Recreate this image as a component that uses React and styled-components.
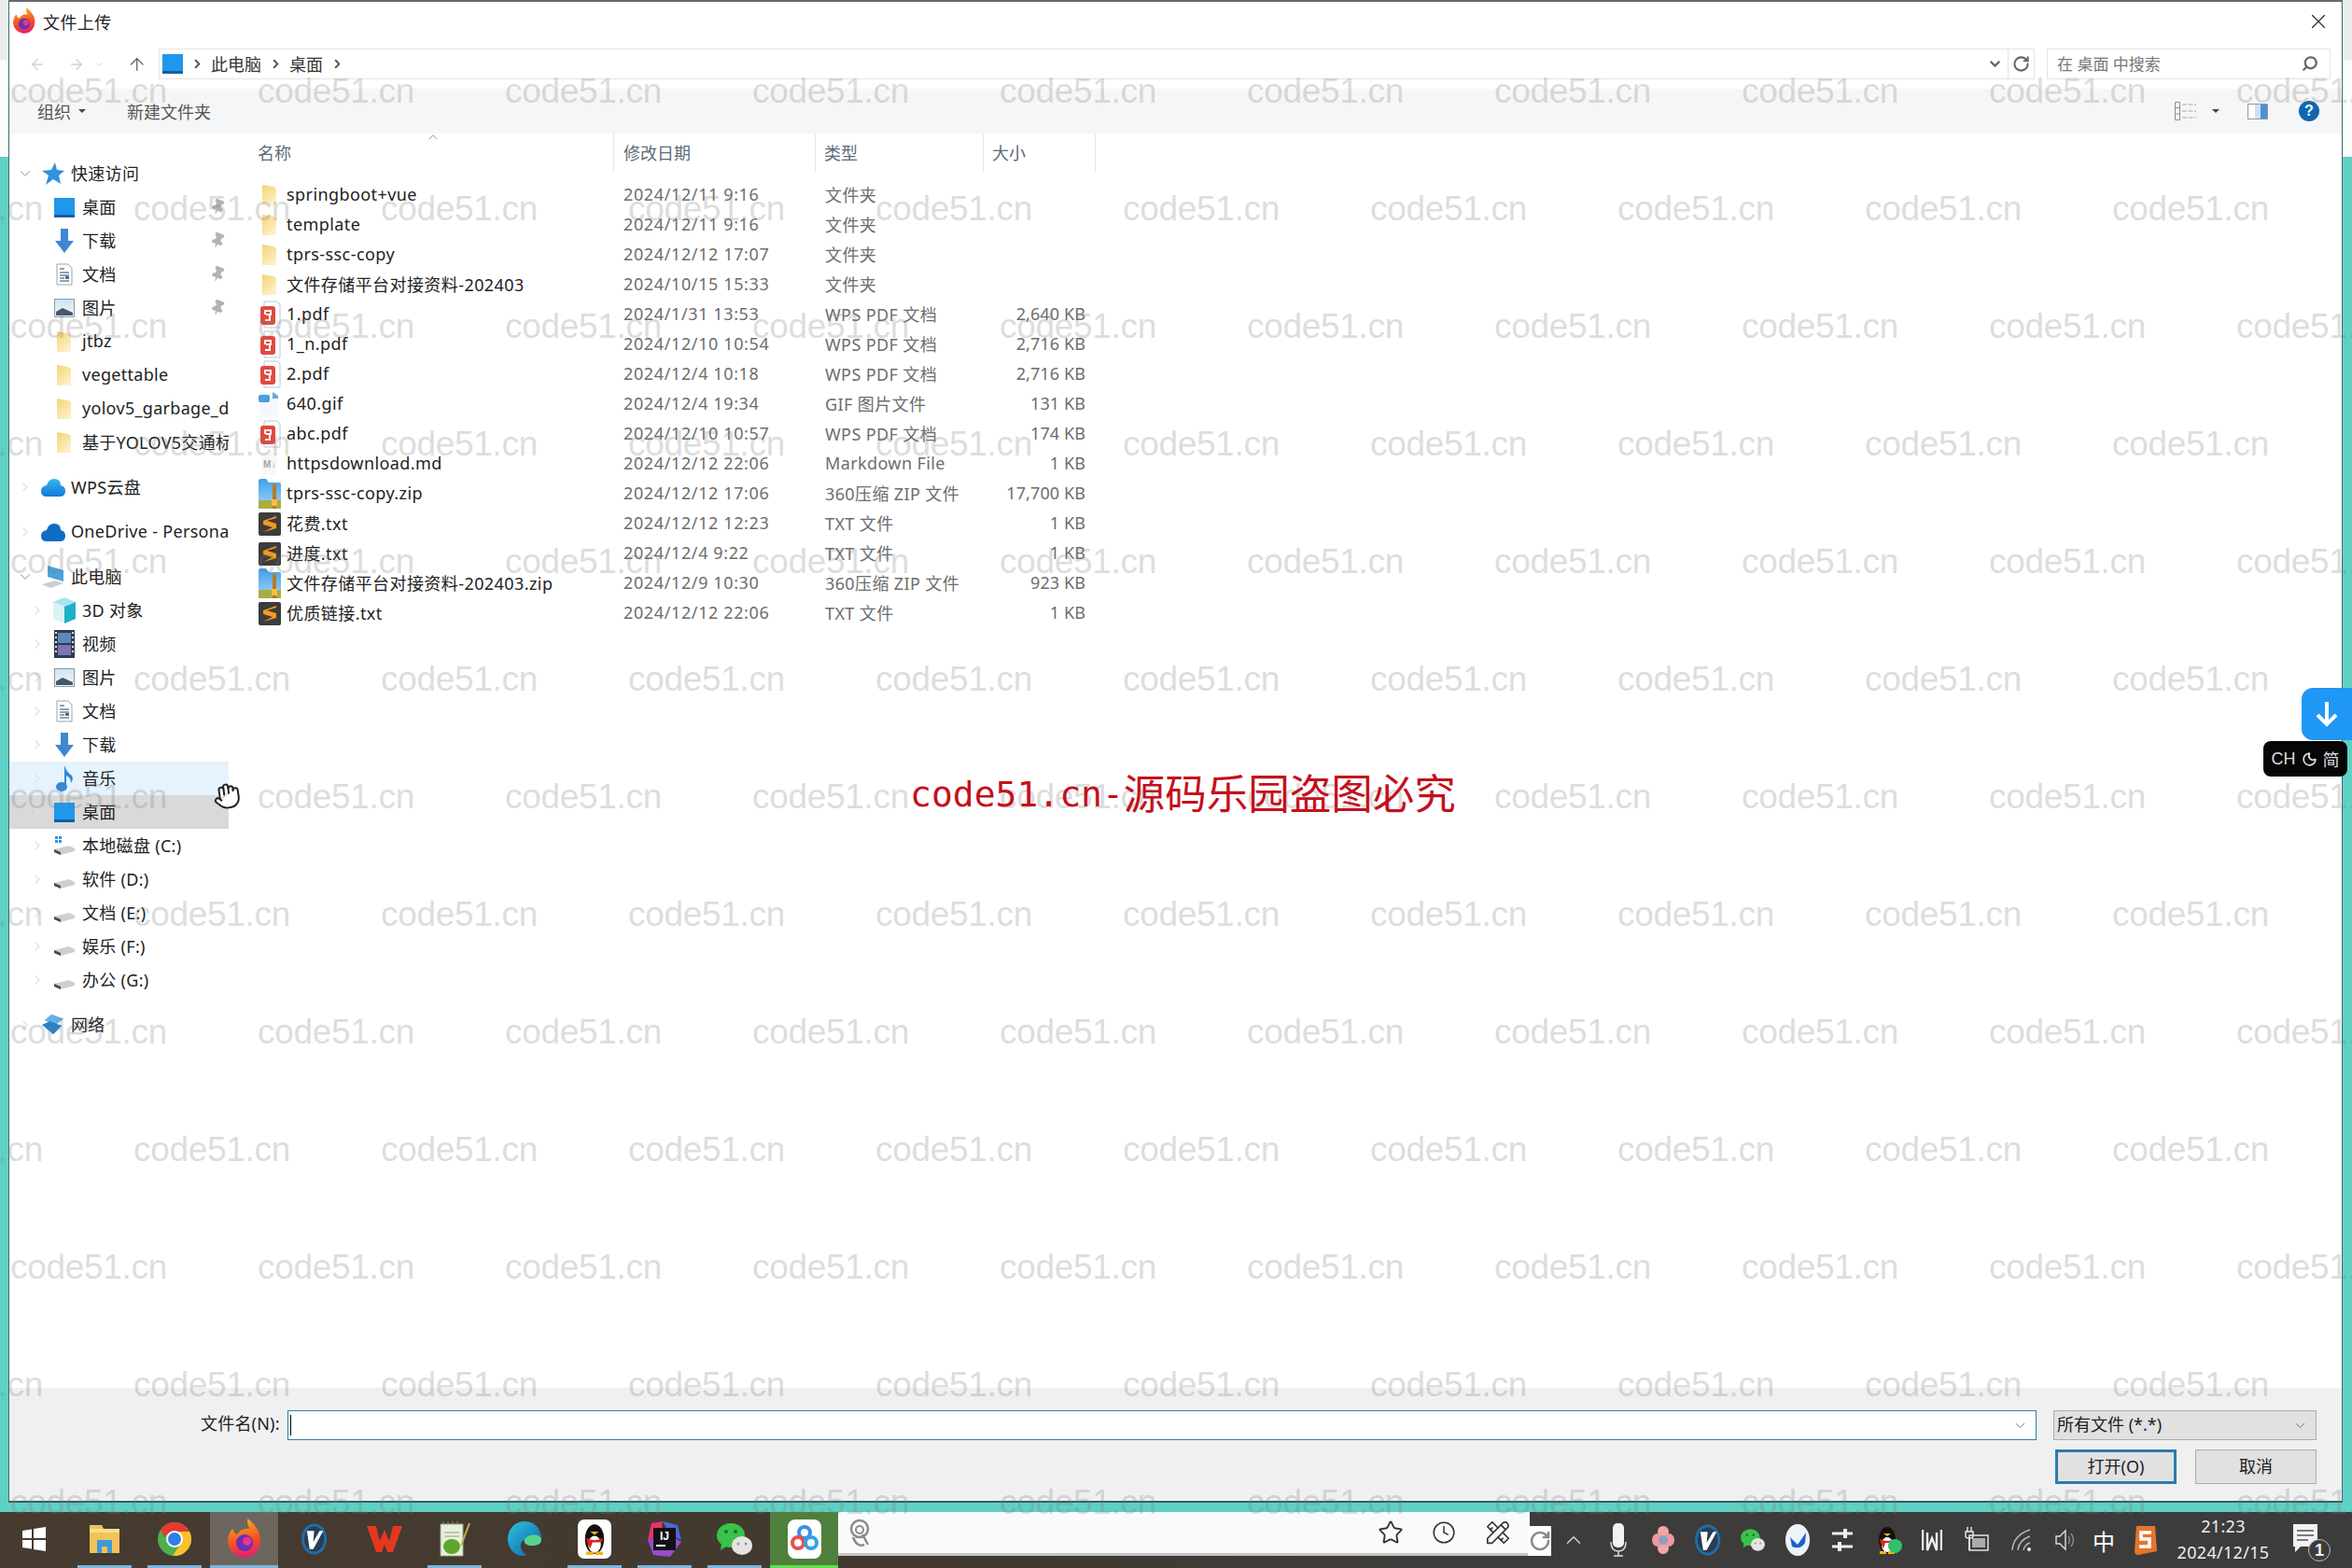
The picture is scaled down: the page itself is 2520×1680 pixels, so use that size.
import styled, { createGlobalStyle } from "styled-components";
import { ArrowLeft, ArrowRight, ArrowUp, ChevronDown, ChevronRight, ChevronUp, Clock, Hand, Moon, Pin, RotateCw, Search, Star, X } from "lucide-react";
import { TbTools } from "react-icons/tb";

const GlobalStyle = createGlobalStyle`
  html, body { margin: 0; padding: 0; background: #5fd0c4; }
  body { font-family: "Noto Sans", "Noto Sans CJK SC", sans-serif; font-size: 18px; color: #222; }
  * { box-sizing: border-box; }
`;

/* ---------- styles ---------- */

const Desktop = styled.div`
  position: relative;
  width: 2520px;
  height: 1680px;
  overflow: hidden;
  display: flex;
  flex-direction: column;
  background: #5fd0c4;
`;

const Upper = styled.div`
  display: flex;
  height: 1620px;
`;

const SideEdge = styled.div`
  width: ${(p) => p.$width}px;
  flex: none;
  display: flex;
  flex-direction: column;
`;

const EdgeTop = styled.div`
  height: 64px;
  background: #ececec;
`;

const EdgeWhite = styled.div`
  height: 104px;
  background: #fbfbfb;
`;

const Window = styled.div`
  width: 2501px;
  height: 1610px;
  flex: none;
  display: flex;
  flex-direction: column;
  background: #fff;
  border-top: 2px solid #6a6a6a;
  border-left: 1px solid #3e6f6b;
  border-right: 1px solid #3e6f6b;
  border-bottom: 2px solid #355f5c;
`;

const TitleBar = styled.div`
  height: 50px;
  flex: none;
  display: flex;
  align-items: center;
  padding: 0 0 9px 4px;
  gap: 8px;
`;

const TitleText = styled.span`
  font-size: 18px;
  color: #222;
  letter-spacing: 0.4px;
`;

const CloseButton = styled.div`
  margin-left: auto;
  margin-right: 12px;
  display: flex;
`;

const NavBar = styled.div`
  height: 33px;
  flex: none;
  display: flex;
  gap: 13px;
  padding-right: 12px;
`;

const NavArrows = styled.div`
  width: 147px;
  flex: none;
  display: flex;
  align-items: center;
  padding-left: 21px;
  gap: 24px;
  svg:nth-child(3) { margin-left: -14px; }
  svg:nth-child(4) { margin-left: 0; }
`;

const Breadcrumb = styled.div`
  flex: 1;
  display: flex;
  align-items: center;
  padding: 0 0 0 3px;
  border: 1px solid #e4e4e4;
  font-size: 18px;
  line-height: 24px;
  color: #333;
`;

const Crumb = styled.span`
  display: flex;
  width: 30px;
  justify-content: center;
`;

const BreadcrumbEnd = styled.div`
  margin-left: auto;
  height: 100%;
  display: flex;
  align-items: center;
  gap: 5px;
`;

const RefreshSlot = styled.div`
  height: 100%;
  width: 28px;
  display: flex;
  align-items: center;
  justify-content: center;
  border-left: 1px solid #e4e4e4;
`;

const SearchBox = styled.div`
  width: 304px;
  flex: none;
  display: flex;
  align-items: center;
  justify-content: space-between;
  padding: 0 12px 2px 10px;
  border: 1px solid #e4e4e4;
  font-size: 17px;
  color: #777;
`;

const MirrorSearch = styled.span`
  display: flex;
  transform: scaleX(-1);
`;

const Toolbar = styled.div`
  margin-top: 10px;
  height: 48px;
  flex: none;
  display: flex;
  align-items: center;
  padding: 0 24px 0 30px;
  gap: 44px;
  background: #f5f6f7;
`;

const ToolLabel = styled.div`
  display: flex;
  align-items: center;
  gap: 8px;
  font-size: 18px;
  color: #555;
`;

const Caret = styled.i`
  width: 0;
  height: 0;
  border-left: 4px solid transparent;
  border-right: 4px solid transparent;
  border-top: 4px solid #444;
`;

const ToolRight = styled.div`
  margin-left: auto;
  display: flex;
  align-items: center;
  gap: 30px;
`;

const ViewSwitch = styled.div`
  display: flex;
  align-items: center;
  gap: 16px;
`;

const PaneSlot = styled.div`
  display: flex;
  margin-right: 3px;
`;

const HelpDot = styled.div`
  width: 22px;
  height: 22px;
  border-radius: 50%;
  background: #1066ae;
  color: #fff;
  font: 700 16px/22px "Liberation Sans", sans-serif;
  text-align: center;
`;

const Body = styled.div`
  flex: 1;
  display: flex;
  min-height: 0;
`;

const Sidebar = styled.div`
  width: 235px;
  flex: none;
  padding-top: 25px;
  display: flex;
  flex-direction: column;
  gap: 12px;
  overflow: hidden;
`;

const NavGroup = styled.div`
  display: flex;
  flex-direction: column;
`;

const NavRow = styled.div`
  position: relative;
  height: 36px;
  flex: none;
  display: flex;
  align-items: center;
  white-space: nowrap;
  overflow: hidden;
  font-size: 18px;
  color: #222;
  background: ${(p) => (p.$state === "hover" ? "#e5f3ff" : p.$state === "selected" ? "#d9d9d9" : "transparent")};
`;

const Twisty = styled.span`
  flex: none;
  display: flex;
  justify-content: center;
  width: ${(p) => (p.$level === 1 ? 34 : 46)}px;
  padding-left: ${(p) => (p.$level === 1 ? 0 : 14)}px;
`;

const NavIcon = styled.span`
  flex: none;
  width: 26px;
  height: 36px;
  display: flex;
  align-items: center;
  justify-content: center;
  margin-right: 6px;
`;

const NavText = styled.span`
  flex: none;
  padding-bottom: 2px;
  letter-spacing: 0.3px;
`;

const PinSlot = styled.span`
  position: absolute;
  right: 3px;
  top: 9px;
  display: flex;
  transform: rotate(20deg);
`;

const FilePane = styled.div`
  flex: 1;
  padding-left: 1px;
`;

const HeaderRow = styled.div`
  height: 41px;
  display: grid;
  grid-template-columns: 412px 216px 180px 120px;
`;

const HeaderCell = styled.div`
  position: relative;
  display: flex;
  align-items: center;
  padding-left: ${(p) => p.$pad}px;
  padding-bottom: 2px;
  border-right: 1px solid #e5e5e5;
  font-size: 18px;
  color: #5a6b7b;
`;

const SortMark = styled.span`
  position: absolute;
  left: 210px;
  top: -4px;
  display: flex;
`;

const FileList = styled.div`
  padding-top: 9px;
`;

const FileRow = styled.div`
  height: 32px;
  display: grid;
  grid-template-columns: 412px 216px 180px 120px;
  align-items: center;
`;

const NameCell = styled.div`
  display: flex;
  align-items: center;
  gap: 6px;
  padding-left: 31px;
  font-size: 18px;
  color: #222;
  white-space: nowrap;
  letter-spacing: 0.42px;
  span:last-child { padding-bottom: 2px; }
`;

const FileIconSlot = styled.span`
  width: 24px;
  height: 32px;
  flex: none;
  display: flex;
  align-items: center;
  justify-content: center;
`;

const MetaCell = styled.div`
  padding-left: 10px;
  padding-bottom: 2px;
  font-size: 18px;
  color: #6d6d6d;
  white-space: nowrap;
  letter-spacing: ${(p) => (p.$date ? 0.62 : 0.38)}px;
`;

const SizeCell = styled(MetaCell)`
  padding: 0 11px 2px 0;
  text-align: right;
  letter-spacing: 0.1px;
`;

const Footer = styled.div`
  height: 121px;
  flex: none;
  padding: 24px 27px 0 205px;
  display: flex;
  flex-direction: column;
  gap: 10px;
  background: #f0f0f0;
`;

const FooterRow = styled.div`
  display: flex;
  height: 32px;
`;

const FieldLabel = styled.div`
  width: 93px;
  flex: none;
  font-size: 18px;
  line-height: 29px;
  color: #222;
  white-space: nowrap;
  letter-spacing: 0.2px;
`;

const NameInput = styled.div`
  width: 1874px;
  flex: none;
  display: flex;
  align-items: center;
  justify-content: space-between;
  padding: 0 8px 0 2px;
  background: #fff;
  border: 1px solid #2c7fa8;
`;

const TextCaret = styled.i`
  width: 1px;
  height: 22px;
  background: #000;
`;

const TypeSelect = styled.div`
  width: 282px;
  flex: none;
  margin-left: 18px;
  display: flex;
  align-items: center;
  justify-content: space-between;
  padding: 0 8px 0 3px;
  background: #e1e1e1;
  border: 1px solid #adadad;
  font-size: 18px;
  line-height: 26px;
  color: #222;
  span { padding-bottom: 3px; }
`;

const ButtonRow = styled.div`
  display: flex;
  justify-content: flex-end;
  gap: 20px;
`;

const DialogButton = styled.div`
  width: 130px;
  height: 37px;
  display: flex;
  align-items: center;
  justify-content: center;
  padding-bottom: 3px;
  background: #e1e1e1;
  border: ${(p) => (p.$primary ? "3px solid #2a7cab" : "1px solid #adadad")};
  font-size: 18px;
  color: #222;
`;

const Taskbar = styled.div`
  height: 60px;
  flex: none;
  display: flex;
  align-items: center;
  background: linear-gradient(90deg, #473b30 0%, #41392f 40%, #3e3c3a 60%, #3c3c3c 100%);
`;

const TaskButtons = styled.div`
  display: flex;
  height: 100%;
`;

const TaskButton = styled.div`
  position: relative;
  width: 73px;
  margin-right: 2px;
  height: 100%;
  flex: none;
  display: flex;
  align-items: center;
  justify-content: center;
  padding-bottom: 2px;
  background: ${(p) => (p.$active ? "#6d665e" : p.$green ? "#4e7f3c" : "transparent")};
  &::after {
    content: "";
    position: absolute;
    left: ${(p) => (p.$active || p.$green ? 0 : 8)}px;
    right: ${(p) => (p.$active || p.$green ? 0 : 7)}px;
    bottom: 0;
    height: 3px;
    background: ${(p) => (p.$green ? "#5fe04d" : p.$running || p.$active ? "#7fb5de" : "transparent")};
  }
`;

const TileWhite = styled.div`
  width: 36px;
  height: 42px;
  border-radius: 7px;
  background: #fff;
  display: flex;
  align-items: center;
  justify-content: center;
`;

const FloatBar = styled.div`
  width: 746px;
  height: 47px;
  align-self: flex-start;
  flex: none;
  margin-left: -7px;
  display: flex;
  align-items: center;
  justify-content: space-between;
  padding: 0 19px 0 17px;
  background: #f8fafc;
  border-bottom: 3px solid #c4c4c4;
`;

const FloatTools = styled.div`
  display: flex;
  align-items: center;
  gap: 30px;
`;

const FloatRefresh = styled.div`
  width: 25px;
  height: 32px;
  flex: none;
  align-self: flex-start;
  margin-top: 15px;
  margin-left: -2px;
  display: flex;
  align-items: center;
  justify-content: center;
  background: #fff;
`;

const Tray = styled.div`
  display: flex;
  align-items: center;
`;

const TraySlot = styled.div`
  width: 48px;
  height: 60px;
  flex: none;
  display: flex;
  align-items: center;
  justify-content: center;
  &:nth-child(13) { width: 32px; }
  &:nth-child(14) { width: 56px; }
`;

const TrayQqWrap = styled.div`
  position: relative;
  display: flex;
`;

const TrayDot = styled.i`
  position: absolute;
  right: -6px;
  bottom: 2px;
  width: 15px;
  height: 15px;
  border-radius: 50%;
  background: #2fc26b;
`;

const ImeGlyph = styled.span`
  font-size: 24px;
  color: #fff;
`;

const Clockbox = styled.div`
  width: 112px;
  flex: none;
  display: flex;
  flex-direction: column;
  align-items: center;
  padding-bottom: 2px;
  font-size: 18px;
  line-height: 28px;
  letter-spacing: 0.3px;
  color: #eee;
`;

const Notify = styled.div`
  position: relative;
  margin-left: 19px;
  display: flex;
`;

const NotifyBadge = styled.span`
  position: absolute;
  right: -12px;
  bottom: -6px;
  width: 24px;
  height: 24px;
  border-radius: 50%;
  background: #3c3c3c;
  border: 1px solid #bbb;
  color: #eee;
  font: 700 18px/22px "Liberation Sans", sans-serif;
  text-align: center;
`;

const Watermarks = styled.div`
  position: absolute;
  inset: 0;
  padding-top: 34px;
  overflow: hidden;
  pointer-events: none;
`;

const WatermarkRow = styled.div`
  height: 126px;
  display: flex;
  align-items: center;
  margin-left: ${(p) => (p.$odd ? -122 : 11)}px;
  span {
    width: 265px;
    flex: none;
    font: 37px/1 "Liberation Sans", sans-serif;
    letter-spacing: -0.3px;
    color: rgba(120, 120, 120, 0.27);
    white-space: nowrap;
  }
`;

const Stamp = styled.div`
  position: absolute;
  left: 975px;
  top: 820px;
  font-size: 44.5px;
  line-height: 60px;
  color: #c4101c;
  white-space: nowrap;
`;

const StampLatin = styled.span`
  font: 38px "DejaVu Sans Mono", monospace;
  vertical-align: 3px;
`;

const DownloadBadge = styled.div`
  position: absolute;
  left: 2466px;
  top: 737px;
  width: 54px;
  height: 56px;
  display: flex;
  align-items: center;
  justify-content: center;
  border-radius: 12px 0 0 12px;
  background: #1f97f5;
`;

const ImePill = styled.div`
  position: absolute;
  left: 2425px;
  top: 794px;
  width: 90px;
  height: 38px;
  display: flex;
  align-items: center;
  justify-content: center;
  gap: 6px;
  border-radius: 8px;
  background: #060606;
  color: #ddd;
  font: 18px "Liberation Sans", "Noto Sans CJK SC", sans-serif;
  white-space: nowrap;
`;

const CursorHand = styled.div`
  position: absolute;
  left: 228px;
  top: 838px;
  display: flex;
  transform: rotate(-8deg);
`;

/* ---------- icons ---------- */

const FolderIcon = () => (
  <svg width="24" height="26" viewBox="0 0 24 26">
    <defs>
      <linearGradient id="fold" x1="0" y1="0" x2="0.6" y2="1">
        <stop offset="0" stopColor="#f5d374" />
        <stop offset="1" stopColor="#fdf0c6" />
      </linearGradient>
    </defs>
    <path d="M4 2 L16 4 L19 6 V24 H4 Z" fill="url(#fold)" />
  </svg>
);

const PdfIcon = () => (
  <svg width="24" height="30" viewBox="0 0 24 30">
    <path d="M6 1 H20 L23 4 V29 H6 Z" fill="#fff" stroke="#b9c6d8" />
    <rect x="2" y="6" width="16" height="20" rx="3" fill="#e2493f" />
    <path d="M7 15 V11 H13 V15 H8 M12 16 V21 H7" fill="none" stroke="#fff" strokeWidth="2" />
  </svg>
);

const GifIcon = () => (
  <svg width="24" height="30" viewBox="0 0 24 30">
    <path d="M2 2 H18 L22 6 V29 H2 Z" fill="#f5f9fd" />
    <rect x="0" y="5" width="12" height="8" rx="2" fill="#4a9fdc" />
    <path d="M15 2 L21 6 V9 H15 Z" fill="#6ca6d6" />
  </svg>
);

const MdIcon = () => (
  <svg width="24" height="26" viewBox="0 0 24 26">
    <path d="M4 1 H20 V25 H4 Z" fill="#f7f7f7" />
    <text x="12" y="17" fontSize="10" fontWeight="700" fontFamily="Liberation Sans" fill="#a5a5a5" textAnchor="middle">M↓</text>
  </svg>
);

const ZipIcon = () => (
  <svg width="24" height="32" viewBox="0 0 24 32">
    <defs>
      <linearGradient id="zipb" x1="0" y1="0" x2="0" y2="1">
        <stop offset="0" stopColor="#3f9fea" />
        <stop offset="1" stopColor="#a6d6f5" />
      </linearGradient>
    </defs>
    <path d="M0 2 Q0 0 3 0 H8 L11 4 H22 Q24 4 24 6 V32 H0 Z" fill="url(#zipb)" />
    <rect x="0" y="23" width="24" height="9" fill="#a9ad45" />
    <rect x="15" y="6" width="4" height="26" fill="#b87a1f" />
    <rect x="14" y="22" width="6" height="7" fill="#f0c044" />
  </svg>
);

const SublimeIcon = () => (
  <svg width="24" height="25" viewBox="0 0 24 25">
    <rect width="24" height="25" rx="2" fill="#3c3c3c" />
    <path d="M19 4 L5 9 V13 L15 16 L5 21 L19 17 V12 L9 9 L19 6 Z" fill="#f49a1c" />
  </svg>
);

const DesktopIcon = () => (
  <svg width="22" height="21" viewBox="0 0 22 21">
    <rect width="22" height="21" fill="#1f97ec" />
    <rect y="18" width="22" height="3" fill="#135f9e" />
  </svg>
);

const DownIcon = () => (
  <svg width="20" height="26" viewBox="0 0 20 26">
    <path d="M6 0 H14 V13 H20 L10 26 L0 13 H6 Z" fill="#3f87d3" />
  </svg>
);

const DocIcon = () => (
  <svg width="18" height="24" viewBox="0 0 18 24">
    <path d="M1 1 H13 L17 5 V23 H1 Z" fill="#fff" stroke="#98a4b2" />
    <path d="M4 6 H9 M4 10 H14 M4 13 H14 M4 16 H9 M4 19 H14" stroke="#6f8296" strokeWidth="1.4" />
    <rect x="10" y="14" width="4" height="3" fill="#3d6f9f" />
  </svg>
);

const PictureIcon = () => (
  <svg width="22" height="20" viewBox="0 0 22 20">
    <defs>
      <linearGradient id="pic" x1="0" y1="0" x2="0" y2="1">
        <stop offset="0" stopColor="#cde3f3" />
        <stop offset="1" stopColor="#f4f8fb" />
      </linearGradient>
    </defs>
    <rect x="0.5" y="0.5" width="21" height="19" fill="url(#pic)" stroke="#8c99a6" />
    <path d="M2 14 L9 10 L20 15 V18 H2 Z" fill="#40586c" />
  </svg>
);

const VideoIcon = () => (
  <svg width="22" height="30" viewBox="0 0 22 30">
    <rect width="22" height="30" fill="#303a4c" />
    <rect x="4" y="3" width="14" height="11" fill="#5d88b8" />
    <rect x="4" y="16" width="14" height="11" fill="#7b74b5" />
    <path d="M1 3h2M1 8h2M1 13h2M1 18h2M1 23h2M19 3h2M19 8h2M19 13h2M19 18h2M19 23h2" stroke="#dfe6ee" strokeWidth="2" />
  </svg>
);

const MusicIcon = () => (
  <svg width="20" height="30" viewBox="0 0 20 30">
    <ellipse cx="7" cy="24" rx="6" ry="5" fill="#2e8ad8" />
    <path d="M10 24 V1 Q12 8 18 12 Q20 16 17 20 Q17 14 12 12 V24 Z" fill="#2e8ad8" />
  </svg>
);

const CloudIcon = ({ dark }) => (
  <svg width="26" height="20" viewBox="0 0 26 20">
    <defs>
      <linearGradient id="wps" x1="0" y1="0" x2="0" y2="1">
        <stop offset="0" stopColor="#35b6f0" />
        <stop offset="1" stopColor="#1278d8" />
      </linearGradient>
    </defs>
    <path d="M6 20 Q0 20 0 14 Q0 9 6 8 Q8 1 14 1 Q21 1 21 8 Q26 9 26 14 Q26 20 20 20 Z" fill={dark ? "#0f6cc4" : "url(#wps)"} />
  </svg>
);

const PcIcon = () => (
  <svg width="26" height="26" viewBox="0 0 26 26">
    <path d="M7 1 L24 6 V18 L7 13 Z" fill="#4ba3dc" />
    <path d="M1 21 L15 17 L24 20 L10 25 Z" fill="#c9ced3" />
  </svg>
);

const CubeIcon = () => (
  <svg width="24" height="28" viewBox="0 0 24 28">
    <path d="M12 0 L24 5 L12 10 L0 5 Z" fill="#a5e5ee" />
    <path d="M0 5 L12 10 V28 L0 23 Z" fill="#d9f2f6" />
    <path d="M12 10 L24 5 V23 L12 28 Z" fill="#1fb0c9" />
  </svg>
);

const DriveIcon = ({ system }) => (
  <svg width="24" height="24" viewBox="0 0 24 24">
    {system && <path d="M2 2h3v3H2zM6 2h3v3H6zM2 6h3v3H2zM6 6h3v3H6z" fill="#2a9be0" />}
    <path d="M1 16 L17 12 L23 15 V18 L8 22 L1 19 Z" fill="#cdd0d3" />
    <path d="M1 16 V19 L8 22 V19 Z" fill="#4a4a4a" />
  </svg>
);

const NetworkIcon = () => (
  <svg width="28" height="26" viewBox="0 0 28 26">
    <path d="M12 1 L26 6 L17 13 L4 8 Z" fill="#64aee2" />
    <path d="M1 13 L10 9 L24 14 L14 24 Z" fill="#2583cc" />
  </svg>
);

const StarIcon = () => (
  <svg width="24" height="24" viewBox="0 0 24 24">
    <path d="M14 0 L16 8 L24 9 L18 14 L20 23 L12 18 L4 24 L7 14 L0 9 L10 8 Z" fill="#2f93e0" />
  </svg>
);

const FirefoxIcon = ({ size = 24 }) => (
  <svg width={size} height={size * 1.2} viewBox="0 0 40 48">
    <defs>
      <linearGradient id="ffx" x1="0.3" y1="0" x2="0.5" y2="1">
        <stop offset="0" stopColor="#ffb328" />
        <stop offset="0.55" stopColor="#f4571f" />
        <stop offset="1" stopColor="#e61e6d" />
      </linearGradient>
    </defs>
    <path d="M24 0 Q33 8 37 16 Q42 30 34 40 Q26 48 16 46 Q2 42 0 28 Q0 18 6 12 Q7 18 11 19 Q16 11 26 12 Q22 6 24 0 Z" fill="url(#ffx)" />
    <circle cx="20" cy="29" r="10" fill="#6c2fb3" />
    <circle cx="23" cy="27" r="5" fill="#e8388a" />
  </svg>
);

const WinLogo = () => (
  <svg width="25" height="26" viewBox="0 0 25 26">
    <path d="M0 4 L10 2.5 V12 H0 Z M12 2 L25 0 V12 H12 Z M0 14 H10 V23.5 L0 22 Z M12 14 H25 V26 L12 24 Z" fill="#fff" />
  </svg>
);

const ExplorerIcon = () => (
  <svg width="32" height="34" viewBox="0 0 32 34">
    <path d="M0 2 H13 L15 6 H32 V32 H0 Z" fill="#f2c25c" />
    <rect x="0" y="6" width="32" height="4" fill="#f9dd90" />
    <path d="M8 32 V18 H24 V32 H19 V25 H13 V32 Z" fill="#3f9ad6" />
  </svg>
);

const ChromeIcon = () => (
  <svg width="36" height="36" viewBox="0 0 36 36">
    <circle cx="18" cy="18" r="18" fill="#4caf50" />
    <path d="M18 0 A18 18 0 0 1 34 10 H18 Q10 10 7 16 L3 8 A18 18 0 0 1 18 0 Z" fill="#e53935" />
    <path d="M34 10 A18 18 0 0 1 16 36 L25 22 Q27 14 22 10 Z" fill="#fbc02d" />
    <circle cx="18" cy="18" r="9" fill="#fff" />
    <circle cx="18" cy="18" r="7" fill="#2f7fe6" />
  </svg>
);

const VIcon = ({ size = 34 }) => (
  <svg width={size * 0.8} height={size} viewBox="0 0 28 34">
    <ellipse cx="14" cy="17" rx="14" ry="17" fill="#1f6ea3" />
    <ellipse cx="14" cy="17" rx="11" ry="14" fill="#2b3c55" />
    <path d="M6 8 H14 L13 20 L20 8 H24 L13 28 H9 Z" fill="#fff" />
  </svg>
);

const WpsIcon = () => (
  <svg width="38" height="28" viewBox="0 0 38 28">
    <path d="M0 0 H10 L14 16 L19 4 L24 16 L28 0 H38 L28 28 H22 L19 20 L16 28 H10 Z" fill="#e2381f" />
  </svg>
);

const NotepadIcon = () => (
  <svg width="34" height="38" viewBox="0 0 34 38">
    <path d="M2 3 H26 V37 H2 Z" fill="#e8f0d8" stroke="#9aa98a" />
    <path d="M5 3 v-3 M10 3 v-3 M15 3 v-3 M20 3 v-3" stroke="#888" />
    <path d="M6 12 H22 M6 16 H22" stroke="#9a9a9a" />
    <ellipse cx="14" cy="27" rx="9" ry="8" fill="#5ea62e" />
    <path d="M24 26 L33 2" stroke="#c9b24a" strokeWidth="2" />
  </svg>
);

const EdgeIcon = () => (
  <svg width="36" height="38" viewBox="0 0 36 38">
    <defs>
      <linearGradient id="edg" x1="0" y1="0" x2="1" y2="1">
        <stop offset="0" stopColor="#2fc4d9" />
        <stop offset="1" stopColor="#0a5fb0" />
      </linearGradient>
    </defs>
    <path d="M18 0 C30 0 36 9 36 19 C36 24 32 26 27 26 C21 26 17 24 18 20 C12 22 12 31 20 36 C10 40 0 30 0 19 C0 8 8 0 18 0 Z" fill="url(#edg)" />
    <path d="M18 20 C20 14 34 12 36 19 C36 24 32 26 27 26 C21 26 17 24 18 20 Z" fill="#56d68b" />
  </svg>
);

const Penguin = ({ w = 20, h = 30 }) => (
  <svg width={w} height={h} viewBox="0 0 20 30">
    <ellipse cx="10" cy="15" rx="9" ry="14" fill="#111" />
    <ellipse cx="10" cy="20" rx="6" ry="8" fill="#fff" />
    <path d="M2 14 Q10 18 18 14 L17 18 L8 18 L6 24 L3 18 Z" fill="#dc2318" />
    <path d="M6 8 h8 l-4 3 Z" fill="#f5b417" />
    <path d="M2 27 h7 v3 h-7 Z M11 27 h7 v3 h-7 Z" fill="#f5b417" />
  </svg>
);

const IdeaIcon = () => (
  <svg width="36" height="38" viewBox="0 0 36 38">
    <path d="M4 2 L16 0 L14 14 L0 20 Z" fill="#e8336a" />
    <path d="M16 0 L32 4 L36 20 L24 14 Z" fill="#4a66df" />
    <path d="M0 20 L6 36 L24 38 L36 22 L20 12 Z" fill="#9a4bd2" />
    <rect x="6" y="7" width="24" height="24" fill="#111" />
    <text x="18" y="20" fontSize="12" fontWeight="700" fontFamily="Liberation Sans" fill="#fff" textAnchor="middle">IJ</text>
    <rect x="9" y="25" width="10" height="2" fill="#fff" />
  </svg>
);

const WechatIcon = ({ size = 38 }) => (
  <svg width={size} height={size} viewBox="0 0 38 38">
    <ellipse cx="15" cy="15" rx="15" ry="13" fill="#39c34b" />
    <path d="M5 24 L4 31 L12 26 Z" fill="#39c34b" />
    <circle cx="10" cy="11" r="2" fill="#20702b" />
    <circle cx="20" cy="11" r="2" fill="#20702b" />
    <ellipse cx="27" cy="26" rx="11" ry="10" fill="#e4e4e4" />
    <circle cx="23" cy="24" r="1.5" fill="#999" />
    <circle cx="31" cy="24" r="1.5" fill="#999" />
  </svg>
);

const BaiduIcon = () => (
  <svg width="36" height="42" viewBox="0 0 36 42">
    <rect width="36" height="42" rx="8" fill="#fff" />
    <circle cx="18" cy="14" r="6" fill="none" stroke="#3b8df0" strokeWidth="4" />
    <circle cx="11" cy="25" r="6" fill="none" stroke="#e6514a" strokeWidth="4" />
    <circle cx="25" cy="25" r="6" fill="none" stroke="#36a3e0" strokeWidth="4" />
  </svg>
);

const QqTile = () => (
  <TileWhite>
    <Penguin w={24} h={34} />
  </TileWhite>
);

const QuarkIcon = () => (
  <svg width="26" height="34" viewBox="0 0 26 34">
    <circle cx="11" cy="13" r="9" fill="none" stroke="#8a8a8a" strokeWidth="2.5" />
    <circle cx="11" cy="14" r="4" fill="none" stroke="#8a8a8a" strokeWidth="2" />
    <path d="M4 22 Q8 33 16 30 M14 19 L20 30" fill="none" stroke="#8a8a8a" strokeWidth="2.5" />
  </svg>
);

const MicIcon = () => (
  <svg width="18" height="36" viewBox="0 0 18 36">
    <rect x="3" y="0" width="12" height="26" rx="5" fill="#f2f2f2" />
    <path d="M1 20 Q1 30 9 30 Q17 30 17 20 M9 30 V35 M4 35 H14" fill="none" stroke="#ddd" strokeWidth="1.5" />
  </svg>
);

const FlowerIcon = () => (
  <svg width="24" height="30" viewBox="0 0 24 30">
    <ellipse cx="12" cy="6" rx="6" ry="6" fill="#f4a6a6" />
    <ellipse cx="12" cy="24" rx="6" ry="6" fill="#f4a6a6" />
    <ellipse cx="6" cy="15" rx="6" ry="7" fill="#ee9a9a" />
    <ellipse cx="18" cy="15" rx="6" ry="7" fill="#ee9a9a" />
    <circle cx="12" cy="15" r="5" fill="#8f9ec6" />
  </svg>
);

const FeishuIcon = () => (
  <svg width="26" height="34" viewBox="0 0 26 34">
    <ellipse cx="13" cy="17" rx="13" ry="17" fill="#eef3fa" />
    <path d="M5 14 L13 22 L22 9 L21 20 Q16 28 7 24 Z" fill="#1e5fd0" />
  </svg>
);

const SlidersIcon = () => (
  <svg width="22" height="24" viewBox="0 0 22 24">
    <path d="M0 5 H22 M0 19 H22" stroke="#eee" strokeWidth="3" />
    <rect x="12" y="0" width="4" height="10" fill="#eee" />
    <rect x="6" y="14" width="4" height="10" fill="#eee" />
  </svg>
);

const TrayQq = () => (
  <TrayQqWrap>
    <Penguin w={20} h={32} />
    <TrayDot />
  </TrayQqWrap>
);

const MemIcon = () => (
  <svg width="22" height="24" viewBox="0 0 22 24">
    <path d="M1 1 V23 M6 4 V23 L11 10 L16 23 V4 M21 1 V23" fill="none" stroke="#eee" strokeWidth="2.4" />
  </svg>
);

const BatteryIcon = () => (
  <svg width="26" height="30" viewBox="0 0 26 30">
    <path d="M3 1 V6 M7 1 V6 M1 6 H9 V11 Q9 13 5 13 Q1 13 1 11 Z M5 13 V26" stroke="#eee" fill="none" strokeWidth="1.4" />
    <rect x="5" y="10" width="20" height="16" fill="none" stroke="#eee" strokeWidth="1.4" />
    <rect x="8" y="13" width="14" height="10" fill="#aaa" />
  </svg>
);

const WifiIcon = () => (
  <svg width="22" height="26" viewBox="0 0 22 26">
    <path d="M1 24 Q2 8 20 2 M7 24 Q8 13 20 9 M13 24 Q14 18 20 16" fill="none" stroke="#bbb" strokeWidth="1.4" />
    <circle cx="19" cy="23" r="2" fill="#eee" />
  </svg>
);

const SpeakerIcon = () => (
  <svg width="24" height="26" viewBox="0 0 24 26">
    <path d="M1 9 H5 L11 3 V23 L5 17 H1 Z" fill="none" stroke="#ddd" strokeWidth="1.4" />
    <path d="M14 9 Q17 13 14 17 M17 6 Q22 13 17 20 " fill="none" stroke="#8a8a8a" strokeWidth="1.4" />
  </svg>
);

const SogouIcon = () => (
  <svg width="26" height="32" viewBox="0 0 26 32">
    <path d="M4 1 H24 L26 28 L6 32 Q2 32 2 28 Z" fill="#e6742c" />
    <path d="M20 8 H9 V15 H18 V23 H7" fill="none" stroke="#fff" strokeWidth="3.6" />
  </svg>
);

const ViewIcon = () => (
  <svg width="24" height="20" viewBox="0 0 24 20">
    <path d="M.5.5h5v19h-5z M.5 6.5h5 M.5 13h5" fill="#fff" stroke="#8a8a8a" />
    <path d="M8 3h15M8 10h15M8 17h15" stroke="#a8a8a8" strokeDasharray="5 1.5" />
  </svg>
);

const PaneIcon = () => (
  <svg width="22" height="17" viewBox="0 0 22 17">
    <rect x="0.5" y="0.5" width="21" height="16" fill="#fff" stroke="#999" />
    <rect x="8" y="1" width="6" height="15" fill="#cfe3f5" />
    <rect x="14" y="1" width="7" height="15" fill="#4a90d9" />
  </svg>
);

const ArrowDownGlyph = () => (
  <svg width="24" height="28" viewBox="0 0 24 28">
    <path d="M12 1 V25 M2 15 L12 25 L22 15" fill="none" stroke="#fff" strokeWidth="4" />
  </svg>
);

/* ---------- data ---------- */

const files = [
  ["folder", "springboot+vue", "2024/12/11 9:16", "文件夹", ""],
  ["folder", "template", "2024/12/11 9:16", "文件夹", ""],
  ["folder", "tprs-ssc-copy", "2024/12/12 17:07", "文件夹", ""],
  ["folder", "文件存储平台对接资料-202403", "2024/10/15 15:33", "文件夹", ""],
  ["pdf", "1.pdf", "2024/1/31 13:53", "WPS PDF 文档", "2,640 KB"],
  ["pdf", "1_n.pdf", "2024/12/10 10:54", "WPS PDF 文档", "2,716 KB"],
  ["pdf", "2.pdf", "2024/12/4 10:18", "WPS PDF 文档", "2,716 KB"],
  ["gif", "640.gif", "2024/12/4 19:34", "GIF 图片文件", "131 KB"],
  ["pdf", "abc.pdf", "2024/12/10 10:57", "WPS PDF 文档", "174 KB"],
  ["md", "httpsdownload.md", "2024/12/12 22:06", "Markdown File", "1 KB"],
  ["zip", "tprs-ssc-copy.zip", "2024/12/12 17:06", "360压缩 ZIP 文件", "17,700 KB"],
  ["txt", "花费.txt", "2024/12/12 12:23", "TXT 文件", "1 KB"],
  ["txt", "进度.txt", "2024/12/4 9:22", "TXT 文件", "1 KB"],
  ["zip", "文件存储平台对接资料-202403.zip", "2024/12/9 10:30", "360压缩 ZIP 文件", "923 KB"],
  ["txt", "优质链接.txt", "2024/12/12 22:06", "TXT 文件", "1 KB"],
];

const fileIcons = {
  folder: <FolderIcon />,
  pdf: <PdfIcon />,
  gif: <GifIcon />,
  md: <MdIcon />,
  zip: <ZipIcon />,
  txt: <SublimeIcon />,
};

const navGroups = [
  [
    { label: "快速访问", level: 1, open: true, icon: <StarIcon /> },
    { label: "桌面", level: 2, pin: true, icon: <DesktopIcon /> },
    { label: "下载", level: 2, pin: true, icon: <DownIcon /> },
    { label: "文档", level: 2, pin: true, icon: <DocIcon /> },
    { label: "图片", level: 2, pin: true, icon: <PictureIcon /> },
    { label: "jtbz", level: 2, icon: <FolderIcon /> },
    { label: "vegettable", level: 2, icon: <FolderIcon /> },
    { label: "yolov5_garbage_d", level: 2, icon: <FolderIcon /> },
    { label: "基于YOLOV5交通标志", level: 2, icon: <FolderIcon /> },
  ],
  [{ label: "WPS云盘", level: 1, arrow: true, icon: <CloudIcon /> }],
  [{ label: "OneDrive - Personal", level: 1, arrow: true, icon: <CloudIcon dark /> }],
  [
    { label: "此电脑", level: 1, open: true, icon: <PcIcon /> },
    { label: "3D 对象", level: 2, arrow: true, icon: <CubeIcon /> },
    { label: "视频", level: 2, arrow: true, icon: <VideoIcon /> },
    { label: "图片", level: 2, arrow: true, icon: <PictureIcon /> },
    { label: "文档", level: 2, arrow: true, icon: <DocIcon /> },
    { label: "下载", level: 2, arrow: true, icon: <DownIcon /> },
    { label: "音乐", level: 2, arrow: true, state: "hover", icon: <MusicIcon /> },
    { label: "桌面", level: 2, arrow: true, state: "selected", icon: <DesktopIcon /> },
    { label: "本地磁盘 (C:)", level: 2, arrow: true, icon: <DriveIcon system /> },
    { label: "软件 (D:)", level: 2, arrow: true, icon: <DriveIcon /> },
    { label: "文档 (E:)", level: 2, arrow: true, icon: <DriveIcon /> },
    { label: "娱乐 (F:)", level: 2, arrow: true, icon: <DriveIcon /> },
    { label: "办公 (G:)", level: 2, arrow: true, icon: <DriveIcon /> },
  ],
  [{ label: "网络", level: 1, arrow: true, icon: <NetworkIcon /> }],
];

const taskItems = [
  { icon: <WinLogo /> },
  { icon: <ExplorerIcon />, running: true },
  { icon: <ChromeIcon />, running: true },
  { icon: <FirefoxIcon size={36} />, running: true, active: true },
  { icon: <VIcon /> },
  { icon: <WpsIcon /> },
  { icon: <NotepadIcon />, running: true },
  { icon: <EdgeIcon /> },
  { icon: <QqTile />, running: true },
  { icon: <IdeaIcon />, running: true },
  { icon: <WechatIcon />, running: true },
  { icon: <BaiduIcon />, green: true },
];

const trayItems = [
  <ChevronUp key="up" size={26} color="#ddd" strokeWidth={1.2} />,
  <MicIcon key="mic" />,
  <FlowerIcon key="fl" />,
  <VIcon key="v" size={34} />,
  <WechatIcon key="wx" size={26} />,
  <FeishuIcon key="fs" />,
  <SlidersIcon key="sl" />,
  <TrayQq key="qq" />,
  <MemIcon key="mem" />,
  <BatteryIcon key="bat" />,
  <WifiIcon key="wifi" />,
  <SpeakerIcon key="spk" />,
  <ImeGlyph key="ime">中</ImeGlyph>,
  <SogouIcon key="sg" />,
];

const watermarkRows = Array.from({ length: 13 }, (_, i) => i);
const watermarkCols = Array.from({ length: 11 }, (_, i) => i);

export default function App() {
  return (
    <Desktop>
      <GlobalStyle />
      <Upper>
        <SideEdge $width={9}>
          <EdgeTop />
          <EdgeWhite />
        </SideEdge>
        <Window>
          <TitleBar>
            <FirefoxIcon size={24} />
            <TitleText>文件上传</TitleText>
            <CloseButton><X size={26} strokeWidth={1} color="#222" /></CloseButton>
          </TitleBar>

          <NavBar>
            <NavArrows>
              <ArrowLeft size={20} color="#d2d2d2" />
              <ArrowRight size={20} color="#d2d2d2" />
              <ChevronDown size={12} color="#d2d2d2" />
              <ArrowUp size={24} strokeWidth={1.5} color="#666" />
            </NavArrows>
            <Breadcrumb>
              <DesktopIcon />
              <Crumb><ChevronRight size={15} color="#555" strokeWidth={3} /></Crumb>
              <span>此电脑</span>
              <Crumb><ChevronRight size={15} color="#555" strokeWidth={3} /></Crumb>
              <span>桌面</span>
              <Crumb><ChevronRight size={15} color="#555" strokeWidth={3} /></Crumb>
              <BreadcrumbEnd>
                <ChevronDown size={17} color="#666" strokeWidth={3} />
                <RefreshSlot><RotateCw size={19} color="#666" strokeWidth={2.6} /></RefreshSlot>
              </BreadcrumbEnd>
            </Breadcrumb>
            <SearchBox>
              <span>在 桌面 中搜索</span>
              <MirrorSearch><Search size={18} color="#666" strokeWidth={3} /></MirrorSearch>
            </SearchBox>
          </NavBar>

          <Toolbar>
            <ToolLabel>组织<Caret /></ToolLabel>
            <ToolLabel>新建文件夹</ToolLabel>
            <ToolRight>
              <ViewSwitch><ViewIcon /><Caret /></ViewSwitch>
              <PaneSlot><PaneIcon /></PaneSlot>
              <HelpDot>?</HelpDot>
            </ToolRight>
          </Toolbar>

          <Body>
            <Sidebar>
              {navGroups.map((group, g) => (
                <NavGroup key={g}>
                  {group.map((item) => (
                    <NavRow key={item.label + g} $level={item.level} $state={item.state}>
                      <Twisty $level={item.level}>
                        {item.open && <ChevronDown size={18} color="#c4c4c4" />}
                        {item.arrow && <ChevronRight size={16} color="#e2e2e2" />}
                      </Twisty>
                      <NavIcon>{item.icon}</NavIcon>
                      <NavText>{item.label}</NavText>
                      {item.pin && <PinSlot><Pin size={17} fill="#b3b3b3" color="#b3b3b3" /></PinSlot>}
                    </NavRow>
                  ))}
                </NavGroup>
              ))}
            </Sidebar>

            <FilePane>
              <HeaderRow>
                <HeaderCell $pad={30}>名称<SortMark><ChevronUp size={16} strokeWidth={1.2} color="#888" /></SortMark></HeaderCell>
                <HeaderCell $pad={10}>修改日期</HeaderCell>
                <HeaderCell $pad={9}>类型</HeaderCell>
                <HeaderCell $pad={9}>大小</HeaderCell>
              </HeaderRow>
              <FileList>
                {files.map(([type, name, date, kind, size]) => (
                  <FileRow key={name}>
                    <NameCell>
                      <FileIconSlot>{fileIcons[type]}</FileIconSlot>
                      <span>{name}</span>
                    </NameCell>
                    <MetaCell $date>{date}</MetaCell>
                    <MetaCell>{kind}</MetaCell>
                    <SizeCell>{size}</SizeCell>
                  </FileRow>
                ))}
              </FileList>
            </FilePane>
          </Body>

          <Footer>
            <FooterRow>
              <FieldLabel>文件名(N):</FieldLabel>
              <NameInput>
                <TextCaret />
                <ChevronDown size={17} color="#777" strokeWidth={1.4} />
              </NameInput>
              <TypeSelect>
                <span>所有文件 (*.*)</span>
                <ChevronDown size={17} color="#777" strokeWidth={1.4} />
              </TypeSelect>
            </FooterRow>
            <ButtonRow>
              <DialogButton $primary>打开(O)</DialogButton>
              <DialogButton>取消</DialogButton>
            </ButtonRow>
          </Footer>
        </Window>
        <SideEdge $width={10}>
          <EdgeTop />
          <EdgeWhite />
        </SideEdge>
      </Upper>

      <Taskbar>
        <TaskButtons>
          {taskItems.map((t, i) => (
            <TaskButton key={i} $active={t.active} $green={t.green} $running={t.running}>
              {t.icon}
            </TaskButton>
          ))}
        </TaskButtons>
        <FloatBar>
          <QuarkIcon />
          <FloatTools>
            <Star size={28} strokeWidth={1.6} color="#333" />
            <Clock size={26} strokeWidth={1.4} color="#333" />
            <TbTools size={30} strokeWidth={1.4} color="#333" />
          </FloatTools>
        </FloatBar>
        <FloatRefresh>
          <RotateCw size={24} color="#8a8a8a" strokeWidth={2.6} />
        </FloatRefresh>
        <Tray>
          {trayItems.map((t, i) => <TraySlot key={i}>{t}</TraySlot>)}
        </Tray>
        <Clockbox>
          <span>21:23</span>
          <span>2024/12/15</span>
        </Clockbox>
        <Notify>
          <svg width="28" height="34" viewBox="0 0 28 34">
            <path d="M0 0 H26 V24 H8 L2 30 V24 H0 Z" fill="#f2f2f2" />
            <path d="M4 7 H22 M4 12 H22 M4 17 H16" stroke="#555" strokeWidth="1.5" />
          </svg>
          <NotifyBadge>1</NotifyBadge>
        </Notify>
      </Taskbar>

      <Watermarks>
        {watermarkRows.map((r) => (
          <WatermarkRow key={r} $odd={r % 2 === 1}>
            {watermarkCols.map((c) => <span key={c}>code51.cn</span>)}
          </WatermarkRow>
        ))}
      </Watermarks>

      <Stamp>
        <StampLatin>code51.cn-</StampLatin>源码乐园盗图必究
      </Stamp>

      <DownloadBadge><ArrowDownGlyph /></DownloadBadge>
      <ImePill>CH <Moon size={17} strokeWidth={2.4} /> 简</ImePill>
      <CursorHand><Hand size={30} fill="#fff" color="#222" strokeWidth={1.6} /></CursorHand>
    </Desktop>
  );
}
